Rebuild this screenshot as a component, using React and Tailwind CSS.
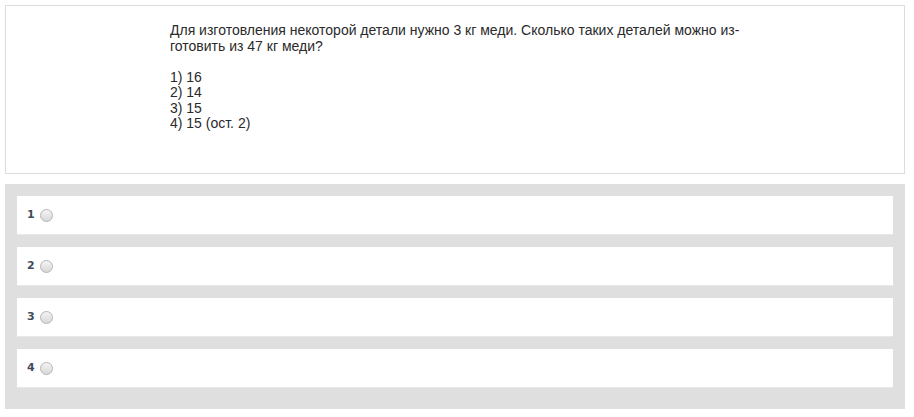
export default function App() {
  const rows = ["1", "2", "3", "4"];
  return (
    <div className="w-[914px] h-[417px] bg-white px-[5px] pt-[5px]" style={{ fontFamily: '"Liberation Sans", Arial, sans-serif' }}>
      <div className="w-[900px] h-[169px] border border-[#dcdcdc] bg-white pl-[164px] pt-[17px]">
        <div className="text-[14px] leading-[15.5px] text-[#2a2a2a] w-[600px]">
          <div className="whitespace-nowrap">Для изготовления некоторой детали нужно 3 кг меди. Сколько таких деталей можно из-</div>
          <div>готовить из 47 кг меди?</div>
          <div className="h-[15.5px]" />
          <div>1) 16</div>
          <div>2) 14</div>
          <div>3) 15</div>
          <div>4) 15 (ост. 2)</div>
        </div>
      </div>
      <div className="w-[900px] mt-[10px] h-[225px] bg-[#dfdfdf] px-[12px] pt-[12px] flex flex-col gap-[12px]">
        {rows.map((r) => (
          <div key={r} className="h-[39px] bg-white border-b border-[#e8e8e8] flex items-center pl-[10px]">
            <span className="text-[11px] font-bold text-[#3f4a5c] w-[13px]" style={{ fontFamily: '"DejaVu Sans", Verdana, sans-serif' }}>{r}</span>
            <span className="w-[13px] h-[13px] rounded-full border border-[#b5b5b5] bg-gradient-to-b from-[#f4f4f4] to-[#d8d8d8]" />
          </div>
        ))}
      </div>
    </div>
  );
}
